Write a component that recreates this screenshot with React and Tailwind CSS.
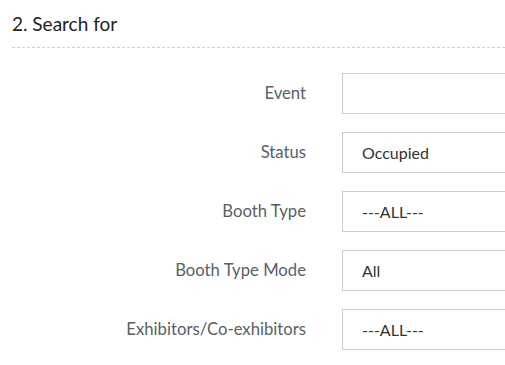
const fields = [
  { label: 'Event', value: '' },
  { label: 'Status', value: 'Occupied' },
  { label: 'Booth Type', value: '---ALL---' },
  { label: 'Booth Type Mode', value: 'All' },
  { label: 'Exhibitors/Co-exhibitors', value: '---ALL---' },
];

export default function App() {
  return (
    <div className="w-[505px] h-[365px] overflow-hidden bg-white font-['Lato',sans-serif]">
      <div className="pl-3">
        <h2 className="h-[47px] pt-[12px] text-[19px] leading-6 text-[#222]">2. Search for</h2>
        <div className="border-t border-dashed border-[#cfcfcf]"></div>
      </div>

      <div className="mt-[25px] flex flex-col gap-[18px]">
        {fields.map((f) => (
          <div key={f.label} className="flex items-center">
            <label className="w-[306px] shrink-0 text-right text-[16.7px] text-[#5a5f66]">{f.label}</label>
            <div className="ml-[36px] w-[200px] h-[41px] shrink-0 border border-[#cccccc] flex items-center px-[19px] text-[16px] text-[#333]">
              {f.value}
            </div>
          </div>
        ))}
      </div>
    </div>
  );
}
